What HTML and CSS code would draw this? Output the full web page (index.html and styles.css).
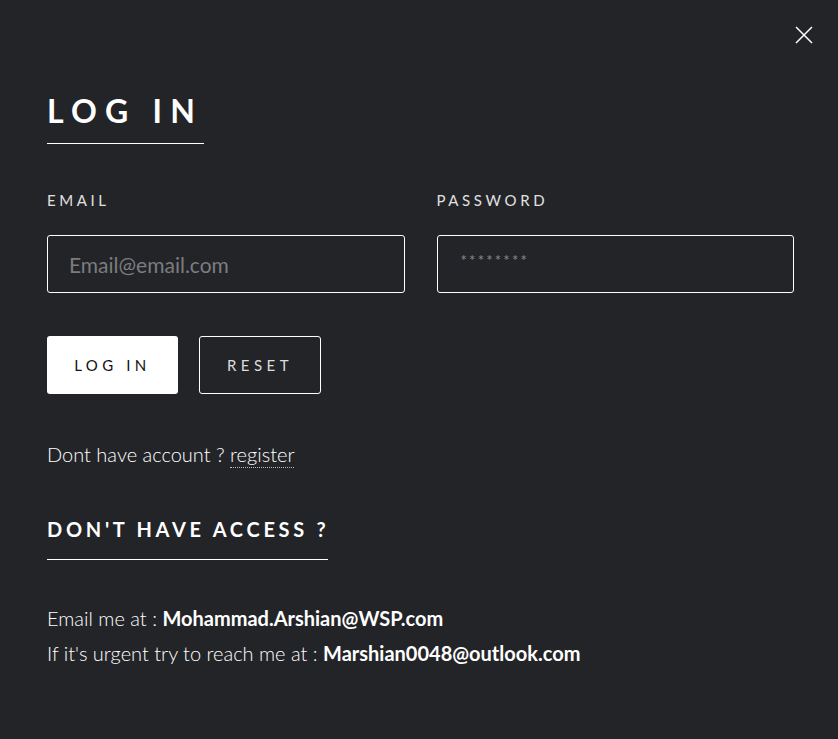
FILE: index.html
```html
<!DOCTYPE html>
<html>
<head>
<meta charset="utf-8">
<link rel="stylesheet" href="styles.css">
</head>
<body>
<div class="modal">
  <button class="close" aria-label="close">
    <svg width="18" height="18" viewBox="0 0 18 18"><path d="M1 1L17 17M17 1L1 17" stroke="#fff" stroke-width="1.5" fill="none"/></svg>
  </button>
  <h1 class="title">LOG IN</h1>
  <div class="fields">
    <div class="field">
      <label class="label">EMAIL</label>
      <div class="input"><span class="ph">Email@email.com</span></div>
    </div>
    <div class="field">
      <label class="label">PASSWORD</label>
      <div class="input"><span class="ph stars">********</span></div>
    </div>
  </div>
  <div class="buttons">
    <button class="btn primary">LOG IN</button>
    <button class="btn outline">RESET</button>
  </div>
  <p class="register">Dont have account ? <a class="link">register</a></p>
  <h2 class="subtitle">DON'T HAVE ACCESS ?</h2>
  <div class="contact">
    <p>Email me at : <b>Mohammad.Arshian@WSP.com</b></p>
    <p>If it's urgent try to reach me at : <b>Marshian0048@outlook.com</b></p>
  </div>
</div>
</body>
</html>
```
FILE: styles.css
```css
html, body { margin: 0; height: 100%; }
body {
  background: #232428;
  color: #fff;
  font-family: "Lato", "Noto Sans", sans-serif;
}
.modal {
  position: relative;
  padding: 93px 44px 0 47px;
}
.close {
  position: absolute;
  top: 26px;
  right: 25px;
  background: none;
  border: 0;
  padding: 0;
  width: 18px;
  height: 18px;
}
.close svg { display: block; }
.title {
  display: inline-block;
  margin: 0;
  font-size: 32px;
  font-weight: 700;
  letter-spacing: 8.2px;
  line-height: 36px;
  padding-bottom: 14px;
  width: 157px;
  border-bottom: 1px solid #fff;
  white-space: nowrap;
}
.fields {
  display: grid;
  grid-template-columns: 1fr 1fr;
  gap: 32px;
  margin-top: 47px;
}
.label {
  display: block;
  font-size: 15px;
  letter-spacing: 3.6px;
  color: #e0e0e0;
  line-height: 18px;
  margin-bottom: 26px;
}
.input {
  height: 56px;
  border: 1px solid #fff;
  border-radius: 3px;
  display: flex;
  align-items: center;
  padding: 0 21px;
}
.ph { color: #7c7c80; font-size: 21px; }
.stars { font-size: 15px; letter-spacing: 2.2px; color: #8a8a8e; margin-top: -8px; padding-left: 2px; }
.buttons {
  display: flex;
  gap: 21px;
  margin-top: 43px;
}
.btn {
  height: 58px;
  font-family: inherit;
  font-size: 15px;
  letter-spacing: 4.5px;
  border-radius: 3px;
  padding: 0;
}
.primary {
  width: 131px;
  background: #fff;
  color: #111;
  border: 0;
}
.outline {
  width: 122px;
  background: transparent;
  color: #ddd;
  border: 1px solid #fff;
}
.register {
  margin: 48px 0 0;
  font-size: 20px;
  line-height: 24px;
  font-weight: 300;
}
.link {
  border-bottom: 1px dotted #bbb;
  padding-bottom: 1px;
}
.subtitle {
  display: inline-block;
  margin: 51px 0 0;
  font-size: 20px;
  font-weight: 700;
  letter-spacing: 3.7px;
  line-height: 24px;
  padding-bottom: 18px;
  width: 281px;
  border-bottom: 1px solid #fff;
  white-space: nowrap;
}
.contact { margin-top: 41px; }
.contact p {
  margin: 0;
  font-size: 20px;
  line-height: 35px;
  font-weight: 300;
}
.contact b { font-weight: 700; }
```
